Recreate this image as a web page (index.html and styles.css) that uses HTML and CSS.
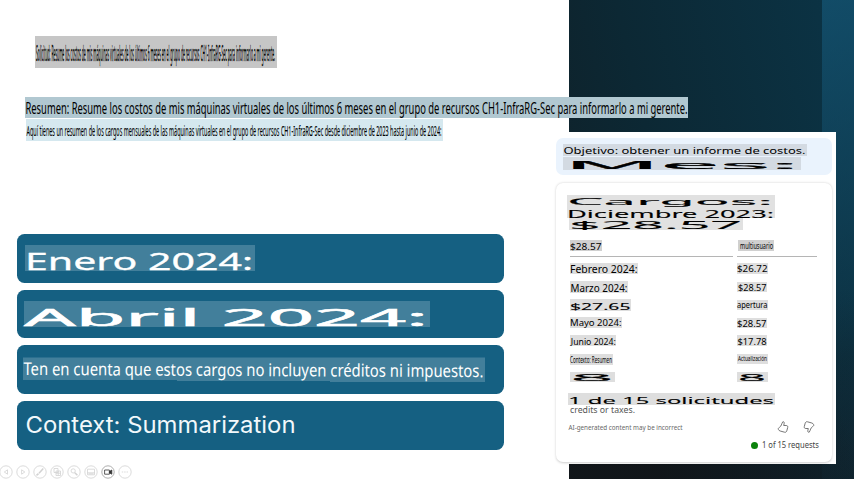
FILE: index.html
```
<!DOCTYPE html>
<html lang="es">
<head>
<meta charset="utf-8">
<title>Resumen de costos</title>
<link rel="stylesheet" href="styles.css">
</head>
<body>
<main class="slide">
  <section class="main">
    <svg class="label request" width="242" height="32"><text x="1" y="25" font-size="21" textLength="239" lengthAdjust="spacingAndGlyphs">Solicitud: Resume los costos de mis máquinas virtuales de los últimos 6 meses en el grupo de recursos CH1-InfraRG-Sec para informarlo a mi gerente.</text></svg>
    <svg class="label summary" width="663" height="21"><text x="0.5" y="16.5" font-size="16" textLength="662" lengthAdjust="spacingAndGlyphs">Resumen: Resume los costos de mis máquinas virtuales de los últimos 6 meses en el grupo de recursos CH1-InfraRG-Sec para informarlo a mi gerente.</text></svg>
    <svg class="label intro" width="417" height="22"><text x="0.5" y="16.7" font-size="14.5" textLength="415" lengthAdjust="spacingAndGlyphs">Aquí tienes un resumen de los cargos mensuales de las máquinas virtuales en el grupo de recursos CH1-InfraRG-Sec desde diciembre de 2023 hasta junio de 2024:</text></svg>
    <div class="bars">
      <div class="bar bar-january"><svg class="label heavy" width="230" height="26"><text x="0" y="25" font-size="23" textLength="228" lengthAdjust="spacingAndGlyphs">Enero 2024:</text></svg></div>
      <div class="bar bar-april"><svg class="label heavy wide" width="406" height="26"><text x="0" y="24.6" font-size="23" textLength="404" lengthAdjust="spacingAndGlyphs">Abril 2024:</text></svg></div>
      <div class="bar bar-note"><svg class="label plain" width="463" height="26"><path class="mark" d="M0 0.5H462V25H307V24H154V23H0Z"/><text x="0.5" y="18" font-size="17.6" textLength="460" lengthAdjust="spacingAndGlyphs" transform="rotate(0.27)">Ten en cuenta que estos cargos no incluyen créditos ni impuestos.</text></svg></div>
      <div class="bar bar-context"><svg class="label plain" width="275" height="30"><text class="inter" x="0.5" y="23" font-size="22.3" textLength="270" lengthAdjust="spacingAndGlyphs">Context: Summarization</text></svg></div>
    </div>
    <nav class="tools">
      <svg class="tool" viewBox="0 0 14 14"><circle cx="7" cy="7" r="6.2"/><path d="M8.5 4.8v4.4L5.3 7z"/></svg>
      <svg class="tool" viewBox="0 0 14 14"><circle cx="7" cy="7" r="6.2"/><path d="M5.6 4.8v4.4L8.8 7z"/></svg>
      <svg class="tool" viewBox="0 0 14 14"><circle cx="7" cy="7" r="6.2"/><path class="thick" d="M10.3 3.5 6 8.2M5.5 8.6 3.5 10.4"/></svg>
      <svg class="tool" viewBox="0 0 14 14"><circle cx="7" cy="7" r="6.2"/><path d="M4 3.5h4v4H4zM6 6h4.5v4.5H6zM6 8.2h4.5M8.2 6v4.5"/></svg>
      <svg class="tool" viewBox="0 0 14 14"><circle cx="7" cy="7" r="6.2"/><circle cx="6.2" cy="5.9" r="2.1"/><path class="thick" d="M7.8 7.7 10.4 10.3"/></svg>
      <svg class="tool" viewBox="0 0 14 14"><circle cx="7" cy="7" r="6.2"/><path d="M3.5 4.2h7v5.6h-7zM3.5 7.8h7M4.5 8.8h5"/></svg>
      <svg class="tool camera" viewBox="0 0 14 14"><circle cx="7" cy="7" r="6.2"/><path d="M3.6 5h4.8v4.2H3.6z"/><path class="solid" d="M8.4 6.5 10.8 5v4.2L8.4 7.8z"/></svg>
      <svg class="tool" viewBox="0 0 14 14"><circle cx="7" cy="7" r="6.2"/><path class="dots" d="M3.8 7h6.6"/></svg>
    </nav>
  </section>
  <aside class="panel">
    <header class="goal">
      <svg class="label" width="244" height="12"><text x="0.5" y="9.6" font-size="9.8" textLength="242" lengthAdjust="spacingAndGlyphs">Objetivo: obtener un informe de costos.</text></svg>
      <svg class="label heavy wide" width="238" height="13"><text x="1" y="11.7" font-size="11" textLength="235" lengthAdjust="spacingAndGlyphs">Mes:</text></svg>
    </header>
    <article class="card">
      <div class="heading">
        <svg class="label heavy" width="208" height="11"><text x="0" y="10" font-size="9.5" textLength="206" lengthAdjust="spacingAndGlyphs">Cargos:</text></svg>
        <svg class="label heavy" width="208" height="12"><text x="0" y="11.7" font-size="11" textLength="207" lengthAdjust="spacingAndGlyphs">Diciembre 2023:</text></svg>
        <svg class="label heavy inset" width="174" height="12"><text x="0" y="11" font-size="10" textLength="173" lengthAdjust="spacingAndGlyphs">$28.57</text></svg>
      </div>
      <div class="table">
        <div class="cell head"><svg class="label" width="32" height="11"><text x="0" y="9.8" font-size="9.4" textLength="31.5" lengthAdjust="spacingAndGlyphs">$28.57</text></svg></div>
        <div class="cell head"><svg class="label nudge" width="36" height="11"><text x="2" y="8.5" font-size="8" textLength="33" lengthAdjust="spacingAndGlyphs">multiusuario</text></svg></div>
        <div class="cell"><svg class="label" width="68" height="11"><text x="0" y="10.3" font-size="10" textLength="67.5" lengthAdjust="spacingAndGlyphs">Febrero 2024:</text></svg></div>
        <div class="cell"><svg class="label" width="31" height="11"><text x="0" y="9.3" font-size="9.4" textLength="30.5" lengthAdjust="spacingAndGlyphs">$26.72</text></svg></div>
        <div class="cell"><svg class="label" width="58" height="12"><text x="0.5" y="11" font-size="10.6" textLength="57" lengthAdjust="spacingAndGlyphs">Marzo 2024:</text></svg></div>
        <div class="cell"><svg class="label" width="30" height="10"><text x="1" y="8.5" font-size="8.8" textLength="28.5" lengthAdjust="spacingAndGlyphs">$28.57</text></svg></div>
        <div class="cell"><svg class="label heavy" width="61" height="12"><text x="0" y="11" font-size="9.8" textLength="60.5" lengthAdjust="spacingAndGlyphs">$27.65</text></svg></div>
        <div class="cell"><svg class="label" width="31" height="10"><text x="0" y="7.5" font-size="8" textLength="30.5" lengthAdjust="spacingAndGlyphs">apertura</text></svg></div>
        <div class="cell"><svg class="label" width="52" height="11"><text x="0" y="9.2" font-size="9.4" textLength="51.5" lengthAdjust="spacingAndGlyphs">Mayo 2024:</text></svg></div>
        <div class="cell"><svg class="label" width="30" height="10"><text x="0" y="8.8" font-size="9" textLength="29.5" lengthAdjust="spacingAndGlyphs">$28.57</text></svg></div>
        <div class="cell"><svg class="label" width="46" height="11"><text x="0.8" y="9.5" font-size="9.8" textLength="45" lengthAdjust="spacingAndGlyphs">Junio 2024:</text></svg></div>
        <div class="cell"><svg class="label" width="30" height="11"><text x="0.5" y="9.5" font-size="9.4" textLength="29" lengthAdjust="spacingAndGlyphs">$17.78</text></svg></div>
        <div class="cell"><svg class="label" width="43" height="11"><text x="0" y="9.3" font-size="8.4" textLength="42" lengthAdjust="spacingAndGlyphs">Contexto: Resumen</text></svg></div>
        <div class="cell"><svg class="label" width="31" height="10"><text x="1" y="7.2" font-size="6.5" textLength="29" lengthAdjust="spacingAndGlyphs">Actualización</text></svg></div>
        <div class="cell"><svg class="label heavy wide" width="45" height="10"><text x="0.5" y="9" font-size="8.6" textLength="43" lengthAdjust="spacingAndGlyphs">8</text></svg></div>
        <div class="cell"><svg class="label heavy" width="31" height="10"><text x="1" y="8.5" font-size="8" textLength="28" lengthAdjust="spacingAndGlyphs">8</text></svg></div>
      </div>
      <svg class="label heavy requests" width="207" height="12"><text x="0" y="11" font-size="9.8" textLength="206" lengthAdjust="spacingAndGlyphs">1 de 15 solicitudes</text></svg>
      <svg class="label plain credits" width="70" height="12"><text x="1" y="7.8" font-size="9" textLength="65" lengthAdjust="spacingAndGlyphs">credits or taxes.</text></svg>
      <div class="feedback">
        <svg class="label plain disclaimer" width="118" height="12"><text x="0.5" y="8.8" font-size="6.8" textLength="114" lengthAdjust="spacingAndGlyphs">AI-generated content may be incorrect</text></svg>
        <svg class="thumb" viewBox="0 0 12 12"><path d="M5.8.8C6.8.5 7.4 1.3 7.2 2.3L6.7 4.5H9.2C10.5 4.5 11 5.3 10.7 6.5L9.8 9.8C9.5 11 8.7 11.5 7.5 11.2L3.2 10C2.3 9.7 1.8 9.3 1.4 8.5 1 7.6 1.4 7 2.4 6.4 4.6 5.1 4.3 3 5.8.8Z"/></svg>
        <svg class="thumb down" viewBox="0 0 12 12"><path d="M5.8.8C6.8.5 7.4 1.3 7.2 2.3L6.7 4.5H9.2C10.5 4.5 11 5.3 10.7 6.5L9.8 9.8C9.5 11 8.7 11.5 7.5 11.2L3.2 10C2.3 9.7 1.8 9.3 1.4 8.5 1 7.6 1.4 7 2.4 6.4 4.6 5.1 4.3 3 5.8.8Z"/></svg>
      </div>
      <div class="usage">
        <i class="dot"></i>
        <svg class="label plain" width="58" height="12"><text x="0" y="9.2" font-size="8.2" textLength="57" lengthAdjust="spacingAndGlyphs">1 of 15 requests</text></svg>
      </div>
    </article>
  </aside>
</main>
</body>
</html>
```
FILE: styles.css
```
* { box-sizing: border-box; }
html, body { margin: 0; }
body {
  width: 854px;
  height: 479px;
  overflow: hidden;
  background: #fff;
  font-family: "Noto Sans", "Open Sans", sans-serif;
}
svg { display: block; flex: none; }
.slide {
  display: grid;
  grid-template-columns: 546px 290px;
  height: 479px;
  background:
    linear-gradient(160deg, rgba(20, 84, 115, 0.75), rgba(20, 60, 80, 0.1) 75%) right / 32px 100% no-repeat,
    linear-gradient(to top, rgba(17, 24, 30, 0.6), rgba(17, 24, 30, 0) 40%),
    radial-gradient(ellipse 290px 200px at 568px 100%, rgba(17, 17, 17, 0.95) 30%, rgba(17, 17, 17, 0) 100%),
    linear-gradient(77deg, #101f26 0%, #0c2834 40%, #0b3446 100%) right / 286px 100% no-repeat;
  background-color: #fff;
  position: relative;
}
.main {
  display: flex;
  flex-direction: column;
  align-items: flex-start;
  padding-top: 36px;
  z-index: 1;
}
.main::before {
  content: "";
  position: absolute;
  left: 0;
  top: 0;
  width: 568.5px;
  height: 479px;
  background: #fff;
  z-index: -1;
}
.label { background: #dedede; fill: #000; overflow: visible; }
.label.plain { background: none; }
.heavy text { stroke: #000; stroke-width: 0.1; }
.request { margin-left: 35px; background: #c6c6c6; }
.request text { stroke: #000; stroke-width: 0.3; }
.summary { margin: 29px 0 0 25px; background: #b1c8d1; }
.intro { margin: 1px 0 0 26px; background: #d5e8ef; }
.intro text { stroke: #000; stroke-width: 0.1; }
.bars {
  display: flex;
  flex-direction: column;
  gap: 7px;
  width: 487.5px;
  margin: 92.8px 0 0 16.5px;
}
.bar {
  height: 48.8px;
  border-radius: 7.5px;
  background: #156082;
  display: flex;
  align-items: flex-start;
}
.bar .label { fill: #fff; background-color: #427f9b; }
.bar .label.plain { background: none; }
.bar .heavy text { stroke: #fff; stroke-width: 0.3; }
.bar .wide text { stroke-width: 0.5; }
.bar .mark { fill: #427f9b; }
.bar-january { padding: 11.2px 0 0 8.5px; }
.bar-april { padding: 11.4px 0 0 7.5px; }
.bar-note { padding: 11.6px 0 0 6.5px; }
.bar-context { padding: 8.6px 0 0 8.7px; }
.inter { font-family: Inter, sans-serif; fill: #f2f8fb; }
.tools { display: flex; gap: 3px; margin: 14.9px 0 0 -1px; }
.tool {
  width: 14px;
  height: 14px;
  fill: none;
  stroke: #d2d2d2;
  stroke-width: 0.8;
}
.tool .thick { stroke-width: 1.5; }
.tool .dots { stroke-dasharray: 1.4 1; }
.camera { stroke: #333; }
.camera circle { stroke: #999; }
.camera .solid { fill: #333; }
.panel {
  height: 332px;
  margin-top: 132px;
  padding: 6px 4px 0 9.5px;
  background: #fff;
  z-index: 1;
}
.goal {
  height: 37px;
  padding: 6px 0 0 7.5px;
  border-radius: 7px;
  background: #eaf3fd;
  display: flex;
  flex-direction: column;
  gap: 1px;
}
.goal .label { background: #d3dae2; }
.goal .wide text { stroke-width: 0.2; }
.card {
  height: 279px;
  margin-top: 7.5px;
  padding-top: 12.5px;
  border-radius: 7px;
  background: #fff;
  box-shadow: 0 0.5px 2.5px rgba(0, 0, 0, 0.2);
}
.heading { margin-left: 11.5px; }
.heading .label { background: #e1e1e1; }
.heading .inset { margin-left: 2px; }
.table {
  display: grid;
  grid-template-columns: 162.5px 80px;
  grid-template-rows: 17px repeat(7, 18.1px);
  column-gap: 4px;
  margin: 10px 0 0 14.5px;
}
.cell { display: flex; align-items: center; }
.cell.head { align-items: flex-start; border-bottom: 1.3px solid #b5b5b5; }
.cell.head .label { background: #d0d0d0; }
.nudge { margin-left: 1px; }
.cell:not(.head) { padding-top: 5px; }
.requests { margin: 9px 0 0 12.5px; }
.credits { margin-left: 13px; fill: #555; }
.feedback { display: flex; align-items: center; margin: 4px 0 0 12.5px; }
.disclaimer { fill: #666; margin-right: 91px; }
.thumb { width: 12px; height: 12px; fill: none; stroke: #666; stroke-width: 0.9; }
.thumb.down { margin-left: 13.5px; transform: rotate(180deg); }
.usage {
  display: flex;
  align-items: center;
  justify-content: flex-end;
  gap: 3.5px;
  margin: 6.5px 12.5px 0 0;
}
.usage .label { fill: #444; }
.dot { width: 7px; height: 7px; border-radius: 50%; background: #0b820b; }
```
